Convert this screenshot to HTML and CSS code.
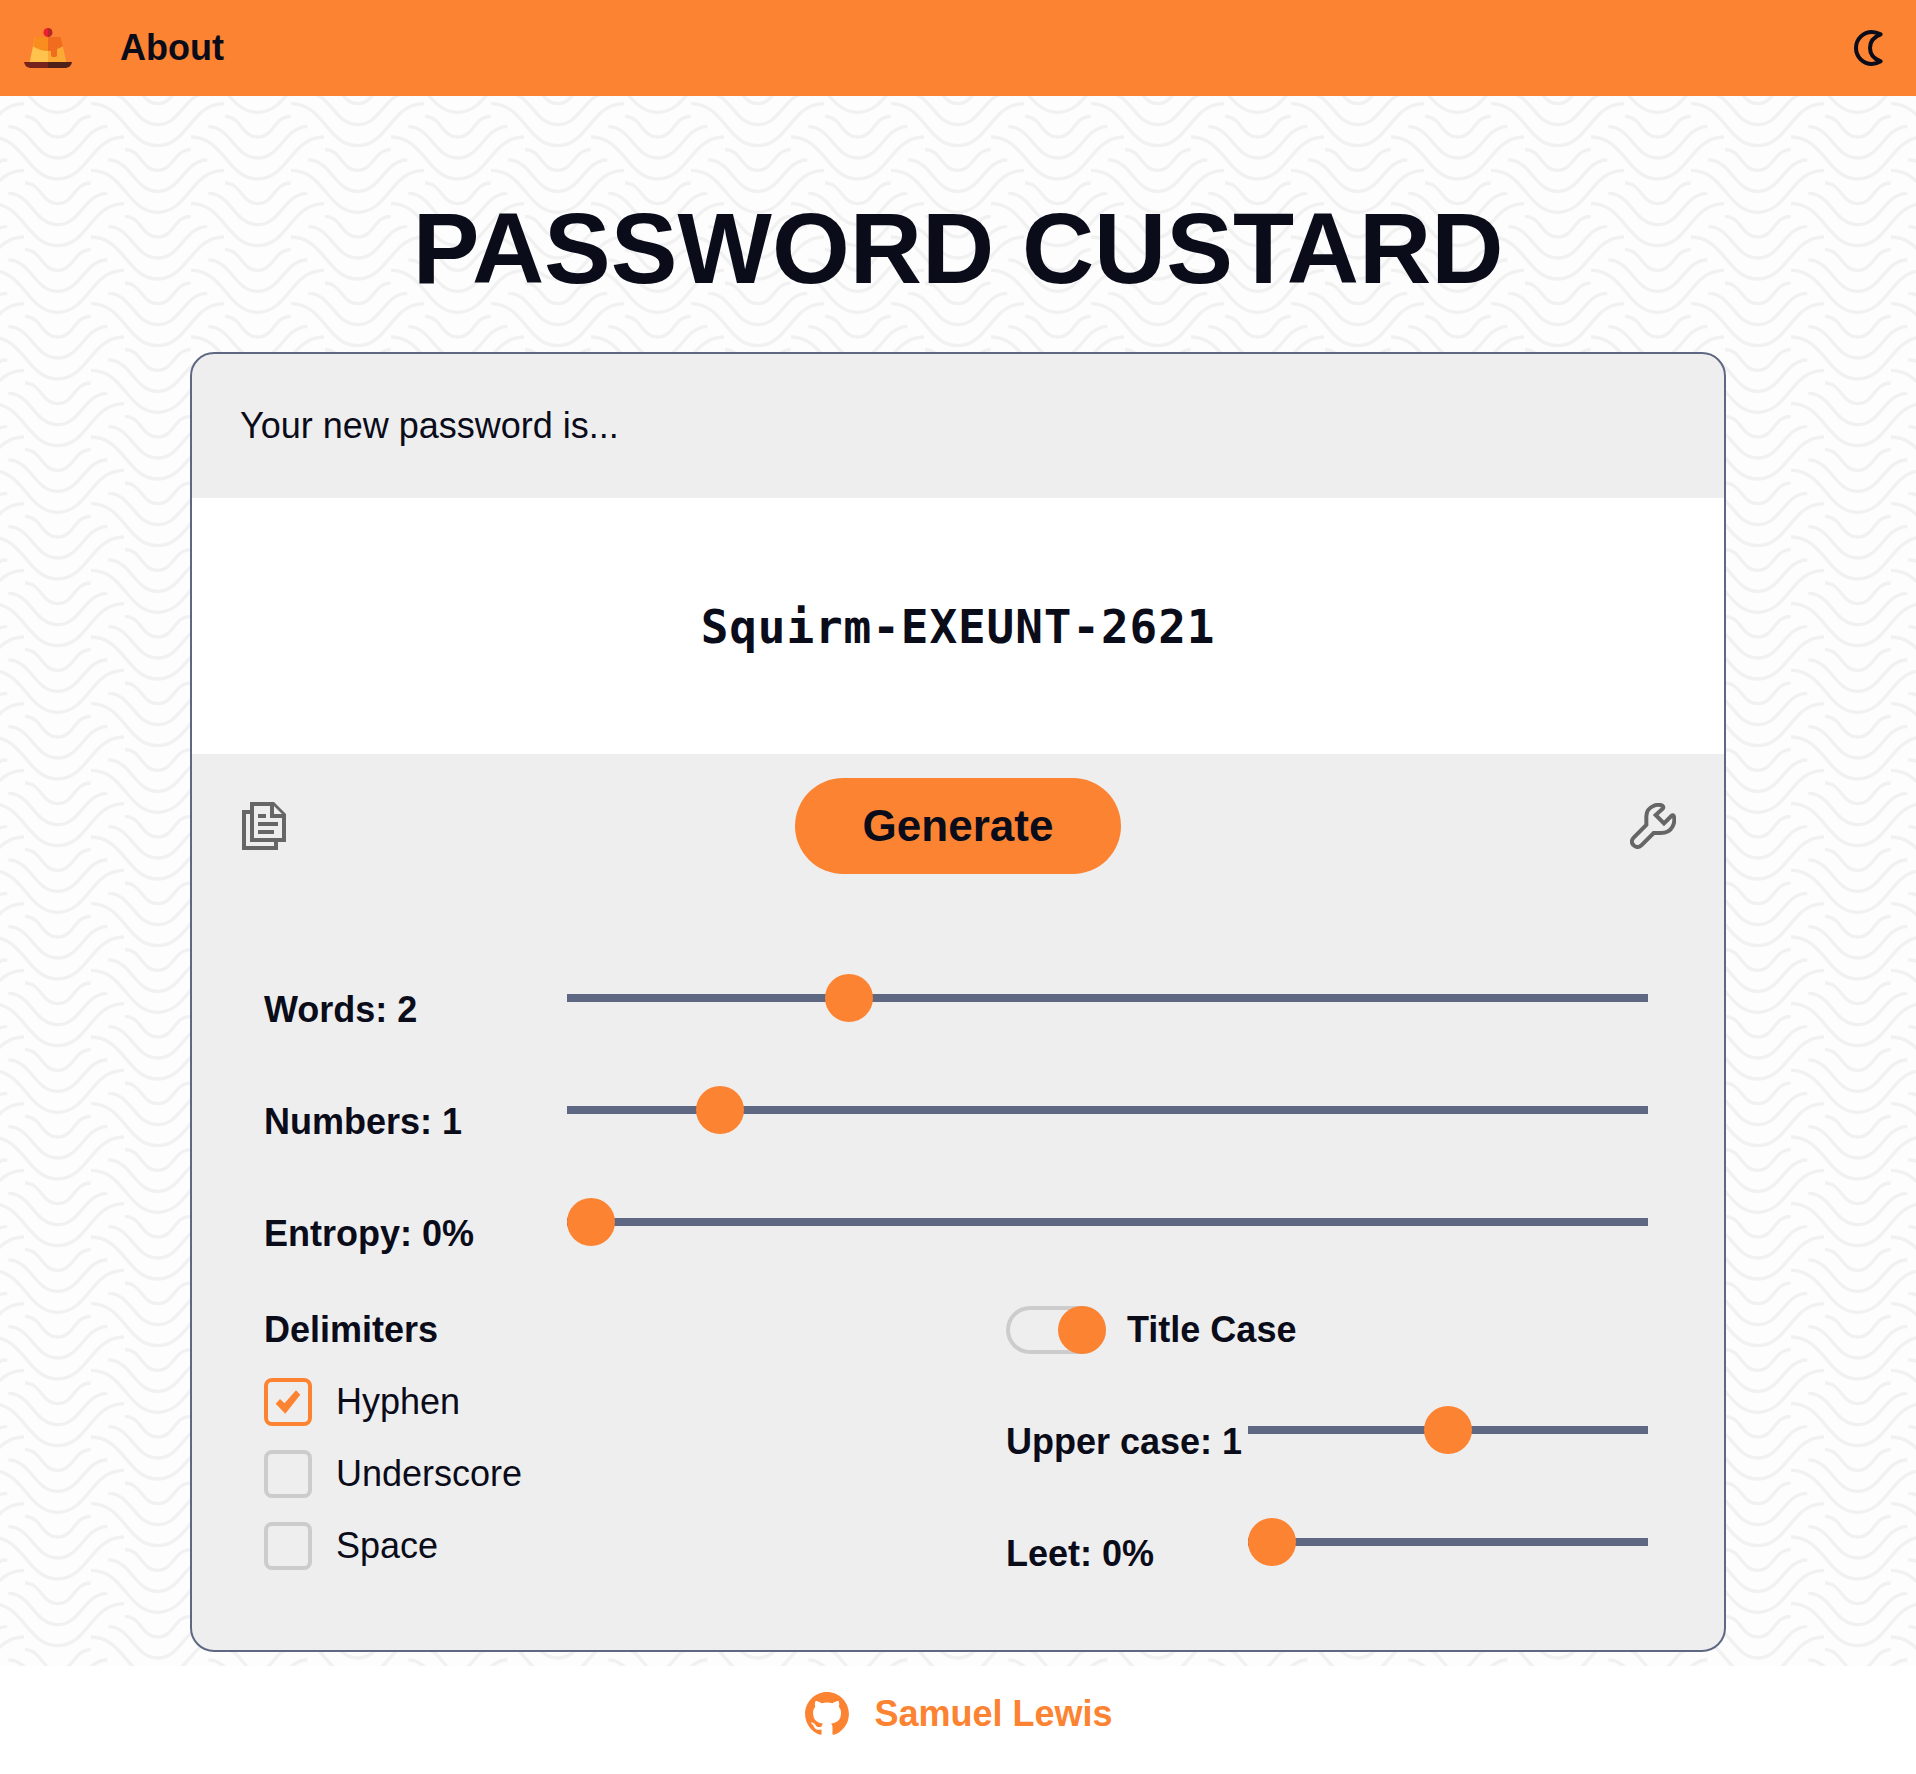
FILE: index.html
```html
<!DOCTYPE html>
<html lang="en">
<head>
<meta charset="utf-8">
<title>Password Custard</title>
<link rel="stylesheet" href="styles.css">
</head>
<body>
<header class="topbar">
  <svg class="logo" viewBox="0 0 144 120">
    <path fill="#fec24d" d="M33 27H72V102H17z"/>
    <path fill="#fdaa35" d="M72 27H110L127 102H72z"/>
    <path fill="#f98d1d" d="M33 27H72V69Q47 69 27 55z"/>
    <path fill="#f06c1f" d="M72 27H110L117 54Q109 60 99 63V82Q99 87 94 87H86Q81 87 81 82V69H72z"/>
    <path fill="#e8212f" d="M72 0A13 13 0 0 0 72 27z"/>
    <path fill="#b92528" d="M72 0A13 13 0 0 1 72 27z"/>
    <path fill="#75231c" d="M0 102H72V120H18Q3 118 0 102z"/>
    <path fill="#4f2118" d="M72 102H144Q141 118 126 120H72z"/>
  </svg>
  <a class="nav-link">About</a>
  <svg class="moon" viewBox="114 90 90 108" fill="none" stroke="#0a0c1a" stroke-width="12" stroke-linejoin="round">
    <path d="M194 103C184 98 177 96 168 96A48 48 0 0 0 168 192C177 192 184 190 194 184C172 176 162 162 162 144C162 126 172 111 194 103z"/>
  </svg>
</header>
<main class="page">
  <h1 class="title">PASSWORD CUSTARD</h1>
  <section class="card">
    <p class="card-head">Your new password is...</p>
    <div class="password">Squirm-EXEUNT-2621</div>
    <div class="actions">
      <svg class="copy" viewBox="0 0 48 48" fill="#666" fill-rule="evenodd">
        <path d="M2 8h8v4H6v32h28v-4h4v8H2z"/>
        <path d="M10 0h24l12 12v28H10zM14 4v32h28V16H30V4zM34 4v8h8z"/>
        <path d="M18 12h8v4h-8zM18 20h20v4H18zM18 28h16v4H18z"/>
      </svg>
      <button class="generate">Generate</button>
      <svg class="wrench" viewBox="90 66 138 138" fill="none" stroke="#666" stroke-width="12" stroke-linejoin="miter">
        <path d="M187 84Q193 78 187 74C180 71 168 71 160 75C146 81 139 91 139 106V132L101 170C94 177 94 186 100 192C107 200 117 200 124 193L161 156H182C200 156 211 150 218 136C223 126 224 115 222 107Q220 99 214 105L192 127L167 102z"/>
      </svg>
    </div>
    <div class="settings">
      <label class="row"><span class="row-label">Words: 2</span><input class="slider" type="range" min="0" max="8" value="2"></label>
      <label class="row"><span class="row-label">Numbers: 1</span><input class="slider" type="range" min="0" max="8" value="1"></label>
      <label class="row"><span class="row-label">Entropy: 0%</span><input class="slider" type="range" min="0" max="100" value="0"></label>
      <div class="options">
        <div class="delimiters">
          <h2 class="subhead">Delimiters</h2>
          <label class="check"><input class="box" type="checkbox" checked>Hyphen</label>
          <label class="check"><input class="box" type="checkbox">Underscore</label>
          <label class="check"><input class="box" type="checkbox">Space</label>
        </div>
        <div class="casing">
          <label class="toggle"><span class="switch"><span class="knob"></span></span>Title Case</label>
          <label class="row"><span class="row-label">Upper case: 1</span><input class="slider" type="range" min="0" max="2" value="1"></label>
          <label class="row"><span class="row-label">Leet: 0%</span><input class="slider" type="range" min="0" max="100" value="0"></label>
        </div>
      </div>
    </div>
  </section>
</main>
<footer class="footer">
  <svg class="github" viewBox="0 0 16 15.7" fill="#fc8332"><path d="M8 0C3.58 0 0 3.58 0 8c0 3.54 2.29 6.53 5.47 7.59.4.07.55-.17.55-.38 0-.19-.01-.82-.01-1.49-2.01.37-2.53-.49-2.69-.94-.09-.23-.48-.94-.82-1.13-.28-.15-.68-.52-.01-.53.63-.01 1.08.58 1.23.82.72 1.21 1.87.87 2.33.66.07-.52.28-.87.51-1.07-1.78-.2-3.64-.89-3.64-3.95 0-.87.31-1.59.82-2.15-.08-.2-.36-1.02.08-2.12 0 0 .67-.21 2.2.82.64-.18 1.32-.27 2-.27s1.36.09 2 .27c1.53-1.04 2.2-.82 2.2-.82.44 1.1.16 1.92.08 2.12.51.56.82 1.27.82 2.15 0 3.07-1.87 3.75-3.65 3.95.29.25.54.73.54 1.48 0 1.07-.01 1.93-.01 2.2 0 .21.15.46.55.38A8.01 8.01 0 0 0 16 8c0-4.42-3.58-8-8-8z"/></svg>
  <a class="author">Samuel Lewis</a>
</footer>
</body>
</html>
```
FILE: styles.css
```css
:root {
  --accent: #fc8332;
  --ink: #0a0c1a;
  --line: #5f6883;
  --panel: #eee;
}
* { box-sizing: border-box; }
body {
  margin: 0;
  font: 36px "Liberation Sans", Arial, sans-serif;
  color: var(--ink);
  background: #fff;
}
.topbar {
  display: flex;
  align-items: center;
  height: 96px;
  padding: 0 32px 0 24px;
  background: var(--accent);
}
.logo { width: 48px; height: 40px; }
.nav-link { margin-left: 48px; font-weight: bold; }
.moon { width: 30px; height: 36px; margin-left: auto; }

.page {
  height: 1570px;
  padding-top: 92px;
  background-color: #fdfdfd;
  background-image: url("data:image/svg+xml,%3Csvg xmlns='http://www.w3.org/2000/svg' xmlns:xlink='http://www.w3.org/1999/xlink' width='200' height='200' viewBox='0 0 600 600'%3E%3Cdefs%3E%3Cg id='w' fill='none' stroke='%23f1f1f1' stroke-width='10'%3E%3Cpath d='M75 61C124 61 124 123 173 123S222 61 272 61M25 92C93 92 103 186 173 186S253 92 322 92M-27 123C72 123 82 249 173 249S273 123 372 123'/%3E%3C/g%3E%3Cg id='p'%3E%3Cuse xlink:href='%23w' x='-600'/%3E%3Cuse xlink:href='%23w'/%3E%3Cuse xlink:href='%23w' x='600'/%3E%3Cuse xlink:href='%23w' x='-300' y='100'/%3E%3Cuse xlink:href='%23w' x='300' y='100'/%3E%3C/g%3E%3C/defs%3E%3Cuse xlink:href='%23p' y='-400'/%3E%3Cuse xlink:href='%23p' y='-200'/%3E%3Cuse xlink:href='%23p'/%3E%3Cuse xlink:href='%23p' y='200'/%3E%3Cuse xlink:href='%23p' y='400'/%3E%3C/svg%3E");
}
.title {
  margin: 0 0 44px;
  text-align: center;
  font-size: 100px;
  line-height: 120px;
}
.card {
  width: 1536px;
  height: 1300px;
  margin: 0 auto;
  background: var(--panel);
  border: 2px solid var(--line);
  border-radius: 24px;
  overflow: hidden;
}
.card-head { margin: 0; padding-left: 48px; line-height: 144px; }
.password {
  height: 256px;
  background: #fff;
  text-align: center;
  font: bold 46px/258px "DejaVu Sans Mono", monospace;
  letter-spacing: 0.9px;
}
.actions {
  display: flex;
  align-items: center;
  justify-content: space-between;
  height: 144px;
  padding: 0 48px;
}
.copy { width: 48px; height: 48px; }
.wrench { width: 46px; height: 46px; margin-left: 2px; }
.generate {
  width: 326px;
  height: 96px;
  border: 0;
  border-radius: 48px;
  background: var(--accent);
  color: var(--ink);
  font: bold 44px "Liberation Sans", Arial, sans-serif;
}

.settings { padding: 56px 76px 0 72px; }
.row { display: flex; align-items: center; height: 112px; font-weight: bold; }
.row-label { width: 303px; white-space: nowrap; }
.slider {
  flex: 1;
  min-width: 0;
  height: 48px;
  margin: 0 0 24px;
  appearance: none;
  background: transparent;
}
.slider::-webkit-slider-runnable-track { height: 8px; background: var(--line); }
.slider::-webkit-slider-thumb {
  appearance: none;
  width: 48px;
  height: 48px;
  margin-top: -20px;
  border-radius: 50%;
  background: var(--accent);
}
.options { display: grid; grid-template-columns: 742px 1fr; padding-top: 16px; }
.subhead { margin: 0; font-size: 36px; line-height: 48px; }
.check { display: flex; align-items: center; gap: 24px; height: 48px; margin-top: 24px; }
.box {
  width: 48px;
  height: 48px;
  margin: 0;
  appearance: none;
  border: 4px solid #ccc;
  border-radius: 8px;
}
.box:checked {
  border-color: var(--accent);
  background: url("data:image/svg+xml,%3Csvg xmlns='http://www.w3.org/2000/svg' viewBox='0 0 48 48'%3E%3Cpath fill='%23fc8332' d='M11.7 25.7L16 21L20.5 25.3L32 12.3L36.3 16.7L21.3 35.7z'/%3E%3C/svg%3E") center / 48px 48px;
}
.casing .row-label { width: 242px; }
.toggle { display: flex; align-items: center; gap: 21px; height: 48px; margin-bottom: 32px; font-weight: bold; }
.switch {
  display: flex;
  justify-content: flex-end;
  align-items: center;
  width: 100px;
  height: 48px;
  border-radius: 24px;
  box-shadow: inset 0 0 0 4px #ccc;
}
.knob { width: 48px; height: 48px; border-radius: 50%; background: var(--accent); }

.footer {
  display: flex;
  align-items: center;
  justify-content: center;
  gap: 25px;
  height: 108px;
  padding: 0 0 13px 2px;
}
.github { width: 44px; height: 43px; }
.author { color: var(--accent); font-weight: bold; }
```
